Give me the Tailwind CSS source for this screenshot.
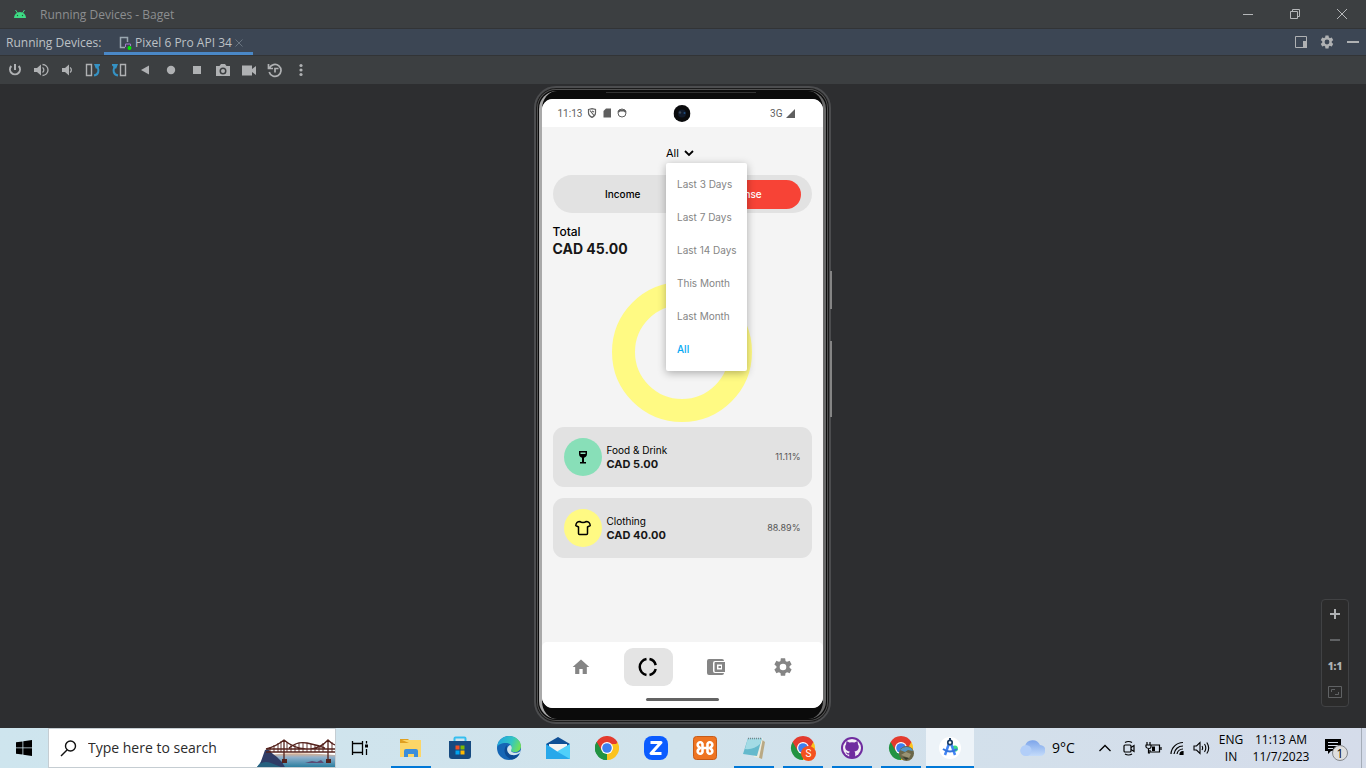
<!DOCTYPE html>
<html lang="en">
<head>
<meta charset="utf-8">
<meta name="viewport" content="width=device-width, initial-scale=1">
<title>Running Devices - Baget</title>
<script src="https://cdn.jsdelivr.net/npm/@tailwindcss/browser@4"></script>
</head>
<body class="flex min-h-screen flex-col bg-[#2d2e30] font-['Open_Sans',sans-serif]">

<!-- Title bar -->
<header class="flex h-[29px] shrink-0 items-center border-b border-[#323436] bg-[#3c3f41] text-xs text-[#8c8e90]">
  <svg class="ml-[13px] h-[14px] w-[14px]" viewBox="0 0 14 14"><path d="M1 11a6 6 0 0 1 12 0z" fill="#3ddc84"/><path d="M2.500 3l2 3M11.500 3l-2 3" stroke="#3ddc84"/><circle cx="4.500" cy="8.500" r=".7" fill="#29543d"/><circle cx="9.500" cy="8.500" r=".7" fill="#29543d"/></svg>
  <h1 class="ml-[13px] pt-[2px]">Running Devices - Baget</h1>
  <div class="ml-auto flex pr-px">
    <button aria-label="Minimize" class="grid w-[47px] place-items-center"><svg width="10" height="10"><path d="M0 5.500h10" stroke="#b5b7b9"/></svg></button>
    <button aria-label="Restore" class="grid w-[47px] place-items-center"><svg width="10" height="10" fill="none" stroke="#b5b7b9"><path d="M.5 2.500h7v7h-7zM2.500 2V.5h7v7H8"/></svg></button>
    <button aria-label="Close" class="grid w-[47px] place-items-center"><svg width="10" height="10" stroke="#b5b7b9"><path d="M0 0l10 10M10 0L0 10"/></svg></button>
  </div>
</header>

<!-- Device tabs -->
<nav class="flex h-[27px] shrink-0 items-center border-b border-[#323436] bg-[#3c4654] text-xs text-[#bdc1c5]">
  <span class="w-[104px] pt-[2px] pl-[6px]">Running Devices:</span>
  <div class="flex h-full w-[149px] items-center border-b-3 border-[#4a88c7] pt-1 pl-[15px]">
    <svg class="h-[14px] w-[13px]" viewBox="0 0 13 14" fill="none"><path d="M8.500 6V1.500h-7v10H6" stroke="#9aa7b0" stroke-width="1.500"/><path d="M6.500 11V8h5v2" stroke="#a37acc"/><circle cx="10.500" cy="12" r="2" fill="#00ea00"/></svg>
    <a href="#" class="ml-[3px]">Pixel 6 Pro API 34</a>
    <button aria-label="Close tab" class="ml-[3px]"><svg width="8" height="8" stroke="#697480"><path d="M.5.5l7 7M7.500.5l-7 7"/></svg></button>
  </div>
  <div class="ml-auto flex text-[#afb1b3]">
    <button aria-label="Window mode" class="grid w-[26px] place-items-center"><svg width="12" height="12"><path d="M.5.5h11v11H.5z" fill="none" stroke="currentColor"/><path d="M8 5h4v7H8z" fill="currentColor"/></svg></button>
    <button aria-label="Options" class="grid w-[26px] place-items-center"><svg width="16" height="16" viewBox="0 0 24 24" fill="currentColor"><path d="M19.140 12.940c.04-.3.060-.61.060-.94 0-.32-.02-.64-.07-.94l2.030-1.580a.49.49 0 0 0 .12-.61l-1.920-3.320a.49.49 0 0 0-.59-.22l-2.390.96c-.5-.38-1.030-.7-1.620-.94l-.36-2.540a.48.48 0 0 0-.48-.41h-3.840c-.24 0-.43.17-.47.41l-.36 2.540c-.59.24-1.130.57-1.620.94l-2.390-.96c-.22-.08-.47 0-.59.22L2.740 8.870c-.12.21-.08.47.12.61l2.030 1.580c-.05.3-.09.63-.09.94s.02.64.07.94l-2.030 1.580a.49.49 0 0 0-.12.61l1.920 3.320c.12.22.37.29.59.22l2.390-.96c.5.38 1.030.7 1.620.94l.36 2.540c.05.24.24.41.48.41h3.840c.24 0 .44-.17.47-.41l.36-2.540c.59-.24 1.130-.56 1.620-.94l2.390.96c.22.08.47 0 .59-.22l1.920-3.320c.12-.22.070-.47-.12-.61zM12 15.600a3.600 3.600 0 1 1 0-7.200 3.600 3.600 0 0 1 0 7.200z"/></svg></button>
    <button aria-label="Hide" class="grid w-[26px] place-items-center"><svg width="12" height="12"><path d="M0 6h12" stroke="currentColor" stroke-width="2"/></svg></button>
  </div>
</nav>

<!-- Emulator toolbar -->
<div role="toolbar" aria-label="Device controls" class="flex h-7 shrink-0 items-center bg-[#3c3f41] pl-[2px] text-[#afb1b3]">
  <button aria-label="Power" class="grid w-[26px] place-items-center"><svg width="16" height="16" fill="none" stroke="currentColor" stroke-width="2"><path d="M8 2v6M4.300 4a5 5 0 1 0 7.400 0"/></svg></button>
  <button aria-label="Volume up" class="grid w-[26px] place-items-center"><svg width="16" height="16"><path d="M1 6h3l4-3.500v11L4 10H1z" fill="currentColor"/><path d="M9.500 5.500a3 3 0 0 1 0 5M9.500 2.500a5.500 5.500 0 0 1 0 11" fill="none" stroke="currentColor" stroke-width="1.300"/></svg></button>
  <button aria-label="Volume down" class="grid w-[26px] place-items-center"><svg width="16" height="16"><path d="M3 6h3l4-3.500v11L6 10H3z" fill="currentColor"/><path d="M11 5.500a3 3 0 0 1 0 5" fill="none" stroke="currentColor" stroke-width="1.300"/></svg></button>
  <button aria-label="Rotate left" class="grid w-[26px] place-items-center"><svg width="16" height="16" fill="none"><path d="M1.500 2.500h5v11h-5z" stroke="currentColor" stroke-width="1.400"/><path d="M9 13.500c5-1 5-5 3.500-9" stroke="#3592c4" stroke-width="2"/><path d="M9 2h6v1.500L11 7z" fill="#3592c4"/></svg></button>
  <button aria-label="Rotate right" class="grid w-[26px] place-items-center"><svg width="16" height="16" fill="none"><path d="M9.500 2.500h5v11h-5z" stroke="currentColor" stroke-width="1.400"/><path d="M7 13.500c-5-1-5-5-3.500-9" stroke="#3592c4" stroke-width="2"/><path d="M7 2H1v1.500L5 7z" fill="#3592c4"/></svg></button>
  <button aria-label="Back" class="grid w-[26px] place-items-center"><svg width="16" height="16" fill="currentColor"><path d="M4 8l8-4.500v9z"/></svg></button>
  <button aria-label="Home" class="grid w-[26px] place-items-center"><svg width="16" height="16" fill="currentColor"><circle cx="8" cy="8" r="4.200"/></svg></button>
  <button aria-label="Overview" class="grid w-[26px] place-items-center"><svg width="16" height="16" fill="currentColor"><path d="M4 4h8v8H4z"/></svg></button>
  <button aria-label="Screenshot" class="grid w-[26px] place-items-center"><svg width="16" height="16" fill="currentColor"><path fill-rule="evenodd" d="M1 4h3.500L6 2h4l1.500 2H15v10H1zM8 5.500a3.500 3.500 0 1 0 0 7 3.500 3.500 0 0 0 0-7z"/><circle cx="8" cy="9" r="2"/></svg></button>
  <button aria-label="Record" class="grid w-[26px] place-items-center"><svg width="16" height="16" fill="currentColor"><path d="M1 3.500h10V7l4-3v9l-4-3v3.500H1z"/></svg></button>
  <button aria-label="Snapshots" class="grid w-[26px] place-items-center"><svg width="16" height="16" fill="none" stroke="currentColor" stroke-width="1.700"><path d="M2.500 6a6 6 0 1 1-.3 4M1.500 2v4.500H6M11.500 6.500H8v4"/></svg></button>
  <button aria-label="More" class="grid w-[26px] place-items-center"><svg width="16" height="16" fill="currentColor"><circle cx="8" cy="3.500" r="1.600"/><circle cx="8" cy="8" r="1.600"/><circle cx="8" cy="12.500" r="1.600"/></svg></button>
</div>

<!-- Device canvas -->
<main class="relative flex flex-1 justify-center pt-[2px] pr-[2px] pb-1">
  <div class="relative flex w-[297px] rounded-[22px] border-2 border-[#4c4d4f] bg-[#0b0b0b] shadow-[inset_0_0_0_1px_#1b1b1b,inset_0_0_0_2px_#515151]">
    <span class="absolute top-[183px] -right-[3px] h-[38px] w-[2px] bg-[#858585]"></span>
    <span class="absolute top-[253px] -right-[3px] h-[76px] w-[2px] bg-[#858585]"></span>
    <span class="absolute top-[4px] left-[70px] h-px w-[150px] bg-[#333]"></span>
    <div class="m-[3px] flex flex-1 rounded-[18px] border-x-3 border-l-[#a9a9a9] border-r-[#686868] pt-2 pb-[11px]">

      <!-- App screen -->
      <div class="relative flex flex-1 flex-col overflow-hidden rounded-[11px] bg-[#f4f4f4] font-['Inter',sans-serif] text-black">
        <div class="relative flex h-7 items-center bg-white pr-7 pl-4 font-['Roboto',sans-serif] text-[10px] text-[#5f5f5f]">
          <span>11:13</span>
          <svg class="ml-[5px]" width="10" height="10" fill="none" stroke="currentColor" stroke-width="1.200"><path d="M1.500 1.500L5 .7l3.500.8v3.500c0 2-1.500 3.500-3.500 4.400C3 8.500 1.500 7 1.500 5zM3 2.500l4 5M5 3l2 1"/></svg>
          <svg class="ml-[5px]" width="10" height="10" fill="currentColor"><path d="M4 .5h5v9H1.500V3z"/></svg>
          <svg class="ml-[5px]" width="10" height="10" fill="none" stroke="currentColor"><circle cx="5" cy="5" r="4"/><path d="M1 4l2-1.500h4L9 4" stroke-width="2"/></svg>
          <span class="ml-auto">3G</span>
          <svg class="ml-[3px]" width="9" height="9" fill="currentColor"><path d="M9 0v9H0z"/></svg>
          <svg class="absolute top-[6px] left-1/2 -translate-x-1/2" width="17" height="17"><circle cx="8.500" cy="8.500" r="8.500" fill="#0a0b0d"/><circle cx="8.500" cy="8.500" r="4" fill="#101a2b"/><circle cx="6.500" cy="7.500" r="1.200" fill="#3c4855"/><circle cx="11" cy="8" r="1" fill="#1c4d80"/></svg>
        </div>

        <section class="flex flex-1 flex-col px-[11px] pt-[18px]">
          <div class="relative mr-1 self-center">
            <button aria-haspopup="menu" aria-expanded="true" class="flex h-4 items-center gap-[5px] text-[11px] leading-4">All
              <svg width="10" height="7" fill="none" stroke="currentColor" stroke-width="1.800"><path d="M1 1l4 4 4-4"/></svg>
            </button>
            <ul role="menu" class="absolute top-[18px] left-0 z-10 flex h-[208px] w-[81px] flex-col rounded-[2px] bg-white pt-[5px] text-[10px] text-[#858585] shadow-[0_2px_8px_rgba(0,0,0,.3)]">
              <li role="none"><button role="menuitem" class="h-[33px] w-full pl-[11px] text-left whitespace-nowrap">Last 3 Days</button></li>
              <li role="none"><button role="menuitem" class="h-[33px] w-full pl-[11px] text-left whitespace-nowrap">Last 7 Days</button></li>
              <li role="none"><button role="menuitem" class="h-[33px] w-full pl-[11px] text-left whitespace-nowrap">Last 14 Days</button></li>
              <li role="none"><button role="menuitem" class="h-[33px] w-full pl-[11px] text-left whitespace-nowrap">This Month</button></li>
              <li role="none"><button role="menuitem" class="h-[33px] w-full pl-[11px] text-left whitespace-nowrap">Last Month</button></li>
              <li role="none"><button role="menuitem" class="h-[33px] w-full pl-[11px] text-left font-medium whitespace-nowrap text-[#03a9f4]">All</button></li>
            </ul>
          </div>

          <div class="mt-[14px] flex h-[38px] rounded-[19px] bg-[#e2e2e2] px-[11px] pt-[5px] pb-1 text-[10px] font-medium">
            <button class="flex-1 rounded-full">Income</button>
            <button class="flex-1 rounded-full bg-[#f74336] text-white">Expense</button>
          </div>

          <h2 class="mt-[11px] text-xs leading-4 font-medium">Total</h2>
          <p class="text-sm leading-[18px] font-bold text-[#171717]">CAD 45.00</p>

          <svg class="mt-6 self-center" width="140" height="140"><circle cx="70" cy="70" r="58.500" fill="none" stroke="#fffa83" stroke-width="23"/></svg>

          <ul class="mt-[5px] flex flex-col gap-[11px]">
            <li class="flex h-[60px] items-center rounded-[11px] bg-[#e2e2e2] px-[11px]">
              <span class="grid h-[38px] w-[38px] place-items-center rounded-full bg-[#88dfb8]"><svg width="16" height="16"><path d="M4 2h8v3c0 2-1.500 3.500-3 3.800V13h2v1.500H5V13h2V8.800C5.500 8.500 4 7 4 5z"/><path d="M5.500 3.500h5v1.500h-5z" fill="#88dfb8"/></svg></span>
              <div class="ml-[5px]"><h3 class="text-[10px] leading-[14px]">Food &amp; Drink</h3><p class="text-[11px] leading-[14px] font-bold text-[#171717]">CAD 5.00</p></div>
              <span class="ml-auto text-[9px] text-[#555]">11.11%</span>
            </li>
            <li class="flex h-[60px] items-center rounded-[11px] bg-[#e2e2e2] px-[11px]">
              <span class="grid h-[38px] w-[38px] place-items-center rounded-full bg-[#fffa83]"><svg width="16" height="16" fill="none" stroke="#000" stroke-width="1.500" stroke-linejoin="round"><path d="M5 1.500c1 1.200 5 1.200 6 0 2 0 4 1.500 4.200 4L12.500 7v6.500q0 1-1 1h-7q-1 0-1-1V7L.8 5.500C1 3 3 1.500 5 1.500z"/></svg></span>
              <div class="ml-[5px]"><h3 class="text-[10px] leading-[14px]">Clothing</h3><p class="text-[11px] leading-[14px] font-bold text-[#171717]">CAD 40.00</p></div>
              <span class="ml-auto text-[9px] text-[#555]">88.89%</span>
            </li>
          </ul>
        </section>

        <nav class="flex h-[66px] flex-col rounded-t-[5px] bg-white pt-[6px] text-[#858585]">
          <div class="flex justify-around px-[6px]">
            <a href="#" aria-label="Home" class="grid h-[38px] w-[49px] place-items-center"><svg width="20" height="20" viewBox="0 0 24 24" fill="currentColor"><path d="M10 20.500v-6h4v6h5v-8.500h3L12 3 2 12h3v8.500z"/></svg></a>
            <a href="#" aria-label="Statistics" class="grid h-[38px] w-[49px] place-items-center rounded-[9px] bg-[#e4e4e4] text-black"><svg width="20" height="20" fill="none" stroke="currentColor" stroke-width="2.500"><path d="M8.500 2.100a8 8 0 0 0 0 15.800M11.500 2.100a8 8 0 0 1 6.200 6M17.700 12a8 8 0 0 1-6.200 5.900"/></svg></a>
            <a href="#" aria-label="Wallet" class="grid h-[38px] w-[49px] place-items-center"><svg width="20" height="20" fill="currentColor"><path d="M3 2h13q2 0 2 2H9Q7 4 7 6v8q0 2 2 2h9q0 2-2 2H3q-2 0-2-2V4q0-2 2-2z"/><path fill-rule="evenodd" d="M9.500 5H19v10H9.500Q8.500 15 8.500 14V6Q8.500 5 9.500 5zM11 7.500v5h5v-5zM12.500 9H15v2h-2.500z"/></svg></a>
            <a href="#" aria-label="Settings" class="grid h-[38px] w-[49px] place-items-center"><svg width="22" height="22" viewBox="0 0 24 24" fill="currentColor"><path d="M19.140 12.940c.04-.3.060-.61.060-.94 0-.32-.02-.64-.07-.94l2.030-1.580a.49.49 0 0 0 .12-.61l-1.920-3.320a.49.49 0 0 0-.59-.22l-2.390.96c-.5-.38-1.030-.7-1.620-.94l-.36-2.540a.48.48 0 0 0-.48-.41h-3.840c-.24 0-.43.17-.47.41l-.36 2.540c-.59.24-1.130.57-1.620.94l-2.390-.96c-.22-.08-.47 0-.59.22L2.740 8.870c-.12.21-.08.47.12.61l2.030 1.580c-.05.3-.09.63-.09.94s.02.64.07.94l-2.030 1.580a.49.49 0 0 0-.12.61l1.920 3.320c.12.22.37.29.59.22l2.390-.96c.5.38 1.030.7 1.620.94l.36 2.540c.05.24.24.41.48.41h3.840c.24 0 .44-.17.47-.41l.36-2.540c.59-.24 1.130-.56 1.620-.94l2.390.96c.22.08.47 0 .59-.22l1.920-3.320c.12-.22.070-.47-.12-.61zM12 15.600a3.600 3.600 0 1 1 0-7.200 3.600 3.600 0 0 1 0 7.200z"/></svg></a>
          </div>
          <span class="mt-3 h-[3px] w-[73px] self-center rounded-full bg-[#636363]"></span>
        </nav>
      </div>
    </div>
  </div>

  <!-- Zoom controls -->
  <div class="absolute right-[17px] bottom-[21px] flex w-7 flex-col rounded border border-[#414244] bg-[#2b2b2b] py-px text-[#afb1b3]">
    <button aria-label="Zoom in" class="grid h-[26px] place-items-center"><svg width="10" height="10" stroke="currentColor" stroke-width="2"><path d="M0 5h10M5 0v10"/></svg></button>
    <button aria-label="Zoom out" class="grid h-[26px] place-items-center"><svg width="10" height="10" stroke="#606264" stroke-width="2"><path d="M0 5h10"/></svg></button>
    <button class="h-[26px] text-[10px] font-extrabold">1:1</button>
    <button aria-label="Fit to screen" class="grid h-[26px] place-items-center"><svg width="14" height="12" fill="none" stroke="#606264"><path d="M.5.500h13v11H.5z"/><path d="M3.500 6V3.500H7M10.500 6v2.500H7"/></svg></button>
  </div>
</main>

<!-- Taskbar -->
<footer class="flex h-10 shrink-0 bg-linear-to-r from-[#cee5ee] via-[#d1e3ec] to-[#d5dcea] text-black">
  <button aria-label="Start" class="grid w-12 place-items-center"><svg width="16" height="16"><path d="M0 2.300L6.500 1.400V7.500H0zM7.300 1.300L16 0v7.500H7.300zM0 8.300h6.500v6.300L0 13.700zM7.300 8.300H16V16l-8.700-1.300z"/></svg></button>
  <label class="flex w-72 items-center border border-[#c5cdd2] bg-white pl-[11px]">
    <svg class="shrink-0" width="17" height="17" fill="none" stroke="#111" stroke-width="1.400"><circle cx="10.500" cy="6" r="5"/><path d="M7 10L1 16"/></svg>
    <input type="text" aria-label="Search" placeholder="Type here to search" class="ml-[11px] w-[160px] min-w-0 flex-1 bg-transparent text-sm outline-none placeholder:text-[#2b2b2b]">
    <svg class="shrink-0 self-end" width="78" height="30">
      <defs><linearGradient id="sea" x2="0" y2="1"><stop stop-color="#e3b18c"/><stop offset=".3" stop-color="#8fb0cd"/><stop offset="1" stop-color="#2c7fa0"/></linearGradient></defs>
      <path d="M8 19q20-5 70-1v12H0z" fill="url(#sea)"/>
      <path d="M2 30l6-17 3-1 5 5 4 3 5 5 4 7z" fill="#2f3c66"/><path d="M0 30q5-7 14-4l10 4z" fill="#26617f"/>
      <path d="M48 26l7-2 5 1 4-2 3 3z" fill="#5b4a74"/>
      <g fill="none" stroke="#55231d" stroke-width="1.300"><path d="M9 12h69M9 15h69M9 12Q20 9 27 3q9 8 22 9T71 3q4 4 7 5M32 11q8-7 18-5t18 5M27 3v22M71 3v22"/><path d="M13 10v5M17 8v7M21 6v9M24 4v11M30 5v10M34 8v7M38 7v8M42 6v9M46 6v9M50 6v9M54 7v8M58 8v7M62 9v6M66 6v9M75 5v10" stroke-width=".9"/></g>
      <path d="M25 22h5v4h-5zM69 22h5v4h-5z" fill="#55231d"/>
    </svg>
  </label>
  <button aria-label="Task view" class="mr-[2px] grid w-12 place-items-center"><svg width="18" height="16" fill="none" stroke="#000" stroke-width="1.300"><path d="M1.500 1v2.500h10V1M1.500 15v-2.500h10V15M1.500 3.500v9M11.500 3.500v9M15.500 1v2.500M15.500 9v6"/><path d="M14 4.500h3v3h-3z" fill="#000" stroke="none"/></svg></button>

  <button aria-label="File Explorer" class="relative grid w-[49px] place-items-center"><svg width="24" height="24"><path d="M1 3h8l2 2v4H1z" fill="#e0a020"/><path d="M3 4h19v17H1V7h9z" fill="#fcd667"/><path d="M5 21v-6q0-2 2-2h10q2 0 2 2v6h-4v-3H9v3z" fill="#3b8edb"/></svg><span class="absolute bottom-0 h-[2px] w-10 bg-[#0078d7]"></span></button>
  <button aria-label="Microsoft Store" class="grid w-[49px] place-items-center"><svg width="24" height="24"><path d="M6.500 6V2.500q0-1 1-1h9q1 0 1 1V6" fill="none" stroke="#36bff0" stroke-width="2"/><path d="M1 5h22v15q0 3-3 3H4q-3 0-3-3z" fill="#164a80"/><path d="M7.500 9.500h4v4h-4z" fill="#f25022"/><path d="M12.500 9.500h4v4h-4z" fill="#7fba00"/><path d="M7.500 14.500h4v4h-4z" fill="#00a4ef"/><path d="M12.500 14.500h4v4h-4z" fill="#ffb900"/></svg></button>
  <button aria-label="Edge" class="grid w-[49px] place-items-center"><svg width="24" height="24"><defs><linearGradient id="eg" x1="0" y1=".2" x2="1" y2=".5"><stop stop-color="#1fa3e0"/><stop offset=".6" stop-color="#33c5c3"/><stop offset="1" stop-color="#6fe05a"/></linearGradient></defs><circle cx="12" cy="12" r="12" fill="#1566b5"/><path d="M0 11C1 4 6 0 12 0c7 0 12 5 12 10 0 4-3 6-6 6-3 0-5-1-4-3 2-3-1-6-5-6-5 0-8 2-9 4z" fill="url(#eg)"/><path d="M10 9c-5 5-2 13 5 14.500 4-.5 6-3 7.500-5.500-6 3-14 0-12.500-9z" fill="#0c4b93"/><path d="M13 9c-5 3-3 9 2 10 3 .5 6-.5 8-2l1-3c-2 3-5 3-7 2.700-4-.7-3-2.700-2.500-3.700C15 12 15 10 13 9z" fill="#d1e4ec"/></svg></button>
  <button aria-label="Mail" class="grid w-[49px] place-items-center"><svg width="24" height="24"><path d="M0 8l12-7 12 7v4H0z" fill="#0f4f95"/><path d="M3 8h18v8H3z" fill="#f3f3f3"/><path d="M0 8l12 8 12-8v15H0z" fill="#28a8ea"/><path d="M24 8v15L11 15.500z" fill="#50d0fa"/></svg></button>
  <button aria-label="Chrome" class="grid w-[49px] place-items-center"><svg width="24" height="24" viewBox="0 0 24 24"><path d="M1.600 6A12 12 0 0 1 22.400 6L12 12z" fill="#e33b2e"/><path d="M22.400 6A12 12 0 0 1 12 24L12 12z" fill="#fcc31e"/><path d="M12 24A12 12 0 0 1 1.600 6L12 12z" fill="#229342"/><path d="M12 6h10.400L17.200 15zM6.800 15L1.600 6 12 6z" fill="#e33b2e"/><path d="M17.200 15L12 24l-1-6 6-10h6z" fill="#fcc31e"/><path d="M1.600 6L6.800 15 12 18v6A12 12 0 0 1 1.600 6z" fill="#229342"/><circle cx="12" cy="12" r="6" fill="#fff"/><circle cx="12" cy="12" r="4.800" fill="#3d7ff0"/></svg></button>
  <button aria-label="Zoom Workplace" class="grid w-[49px] place-items-center"><svg width="24" height="24"><rect width="24" height="24" rx="8" fill="#0b5cff"/><path d="M6.500 6.500H17L7 17.500h10.500" fill="none" stroke="#fff" stroke-width="3" stroke-linejoin="round"/></svg></button>
  <button aria-label="XAMPP" class="grid w-[49px] place-items-center"><svg width="24" height="24"><rect x=".5" y=".5" width="23" height="23" rx="3" fill="#ee7421" stroke="#c65b18"/><path d="M9.500 12V8a2.500 2.500 0 1 0-3.500 3l1 1-1 1a2.500 2.500 0 1 0 3.500 3v-4zM14.500 12V8a2.500 2.500 0 1 1 3.500 3l-1 1 1 1a2.500 2.500 0 1 1-3.500 3v-4zM9 12h6" fill="none" stroke="#fff" stroke-width="2.600" stroke-linejoin="round"/></svg></button>
  <button aria-label="Notepad" class="relative grid w-[49px] place-items-center"><svg width="24" height="24"><path d="M19 3l4 3-3 17-5-2z" fill="#b9a984"/><path d="M7 2h14l-4 20-5-1z" fill="#ececdf"/><path d="M6 2h14l-5 18-14-2z" fill="#64b9cc"/><path d="M6 2h14l-2 6q-6 6-15 5z" fill="#a3dbe5"/><path d="M6 2.500h14" stroke="#77858a" stroke-width="1.500" stroke-dasharray="1 1"/></svg><span class="absolute bottom-0 h-[2px] w-10 bg-[#0078d7]"></span></button>
  <button aria-label="Chrome profile S" class="relative grid w-[49px] place-items-center"><svg width="26" height="26" viewBox="0 0 26 26"><g transform="translate(1 1)"><path d="M1.600 6A12 12 0 0 1 22.400 6L12 12z" fill="#e33b2e"/><path d="M22.400 6A12 12 0 0 1 12 24L12 12z" fill="#fcc31e"/><path d="M12 24A12 12 0 0 1 1.600 6L12 12z" fill="#229342"/><path d="M12 6h10.400L17.200 15zM6.800 15L1.600 6 12 6z" fill="#e33b2e"/><circle cx="12" cy="12" r="6" fill="#fff"/><circle cx="12" cy="12" r="4.800" fill="#3d7ff0"/></g><circle cx="18.500" cy="18.500" r="7.500" fill="#f4511e"/><text x="18.500" y="22" text-anchor="middle" font-size="10" fill="#fff" font-family="Roboto, sans-serif">S</text></svg><span class="absolute bottom-0 h-[2px] w-10 bg-[#0078d7]"></span></button>
  <button aria-label="GitHub Desktop" class="relative grid w-[49px] place-items-center"><svg width="22" height="22"><circle cx="11" cy="11" r="11" fill="#6f2c9f"/><circle cx="11" cy="11" r="9" fill="#f1edf5"/><path d="M5.500 4l3 1.500q2.500-.6 5 0l3-1.500.5 3.500q1 1.200.8 3-.5 3.500-4.300 4 .7.800.7 2V20a9 9 0 0 1-6 0v-2.500c-2 .3-2.500-.8-3.500-2.300 1.200-.3 1.500 1.300 3.500 1 0-.7.2-1.200.6-1.700-3.800-.5-4.700-2.500-4.600-5q0-1 .8-2z" fill="#6f2c9f"/></svg><span class="absolute bottom-0 h-[2px] w-10 bg-[#0078d7]"></span></button>
  <button aria-label="Chrome profile" class="relative grid w-[49px] place-items-center"><svg width="26" height="26" viewBox="0 0 26 26"><g transform="translate(1 1)"><path d="M1.600 6A12 12 0 0 1 22.400 6L12 12z" fill="#e33b2e"/><path d="M22.400 6A12 12 0 0 1 12 24L12 12z" fill="#fcc31e"/><path d="M12 24A12 12 0 0 1 1.600 6L12 12z" fill="#229342"/><path d="M12 6h10.400L17.200 15zM6.800 15L1.600 6 12 6z" fill="#e33b2e"/><circle cx="12" cy="12" r="6" fill="#fff"/><circle cx="12" cy="12" r="4.800" fill="#3d7ff0"/></g><circle cx="18.500" cy="18.500" r="7.500" fill="#6b6749"/><path d="M12 15q4-5 11-2l2 3-5-1-3 2z" fill="#5597c5"/><path d="M13 20l5-3 5 2-2 4z" fill="#9a9273"/><path d="M15 22l6 1-3 2z" fill="#34382a"/></svg><span class="absolute bottom-0 h-[2px] w-10 bg-[#0078d7]"></span></button>
  <button aria-label="Android Studio" class="relative ml-px grid w-12 place-items-center bg-[#edf3f8]"><svg width="24" height="24"><circle cx="12" cy="12" r="11" fill="#fff"/><path d="M14 10q6-2 6 3 0 3-5 3z" fill="#3ddc84"/><path d="M11.500 6L7 19M12.500 6L17 19" stroke="#4285f4" stroke-width="2.500"/><path d="M5 13q7 5 14 0" fill="none" stroke="#3474dd" stroke-width="2"/><circle cx="12" cy="6.500" r="2.200" fill="#fff" stroke="#1d3f66" stroke-width="1.700"/><path d="M12 2v2" stroke="#1d3f66" stroke-width="2"/></svg><span class="absolute inset-x-0 bottom-0 h-[2px] bg-[#0078d7]"></span></button>

  <!-- System tray -->
  <div class="ml-auto flex">
    <button class="flex w-[73px] items-center gap-[7px] text-sm"><svg class="shrink-0" width="25" height="18"><defs><linearGradient id="cl" x2="0" y2="1"><stop stop-color="#7da5ea"/><stop offset="1" stop-color="#c3dbfa"/></linearGradient></defs><path d="M6 17a5 5 0 0 1-1-10 8 8 0 0 1 15-1 5.500 5.500 0 0 1 0 11z" fill="url(#cl)"/><circle cx="6" cy="11.500" r="5.500" fill="#b2cef8"/></svg>9°C</button>
    <button aria-label="Show hidden icons" class="grid w-6 place-items-center"><svg width="12" height="8" fill="none" stroke="#000" stroke-width="1.300"><path d="M.5 7L6 1.500 11.500 7"/></svg></button>
    <button aria-label="Meet now" class="grid w-6 place-items-center"><svg width="14" height="16" fill="none" stroke="#000" stroke-width="1.200"><rect x="2" y="5" width="7" height="7" rx="1"/><path d="M9 7.500l3-2v6l-3-2M3 2.500q3.500-2 7 0M3 14q3.500 2 7 0"/></svg></button>
    <button aria-label="Battery" class="grid w-6 place-items-center"><svg width="17" height="14" fill="none" stroke="#000" stroke-width="1.200"><path d="M6 4h8.500v7H5V9M16 6v3M2 1v3M5 1v3M.5 4H6v2q0 1.500-2 1.500T1 6V4M3.500 8v4H5"/><path d="M7 5.500h3V10H7z" fill="#000" stroke="none"/></svg></button>
    <button aria-label="Network" class="grid w-6 place-items-center"><svg width="14" height="14" fill="none" stroke="#000" stroke-width="1.200"><path d="M1 13A12 12 0 0 1 13 1.500M4 13a9 9 0 0 1 9-8M7 13a6 6 0 0 1 6-5"/><path d="M10 13.500a3 3 0 0 1 3-3v3z" fill="#000"/></svg></button>
    <button aria-label="Volume" class="grid w-6 place-items-center"><svg width="17" height="14" fill="none" stroke="#000" stroke-width="1.100"><path d="M1 5h2.500L7 1.500v11L3.500 9H1zM9 5q1.300 2 0 4M11.500 3q2.600 4 0 8M13.800 1.500q3.800 5.500 0 11"/></svg></button>
    <button class="w-9 text-center text-xs leading-[17px]">ENG<br>IN</button>
    <button class="w-16 text-center text-xs leading-[17px] whitespace-nowrap"><time datetime="2023-11-07T11:13">11:13 AM<br>11/7/2023</time></button>
    <button aria-label="Notifications" class="grid w-12 place-items-center"><svg width="26" height="26"><path d="M1 4h16v12H7l-3 3v-3H1z"/><path d="M4 7.500h10M4 10.500h10M4 13.500h5" stroke="#d5dcea"/><circle cx="16" cy="18" r="7.500" fill="#dedede" stroke="#84878b"/><text x="16" y="22.500" text-anchor="middle" font-size="12" font-family="Open Sans, sans-serif">1</text></svg></button>
    <button aria-label="Show desktop" class="w-[5px] border-l border-[#a5adb8]"></button>
  </div>
</footer>
</body>
</html>
